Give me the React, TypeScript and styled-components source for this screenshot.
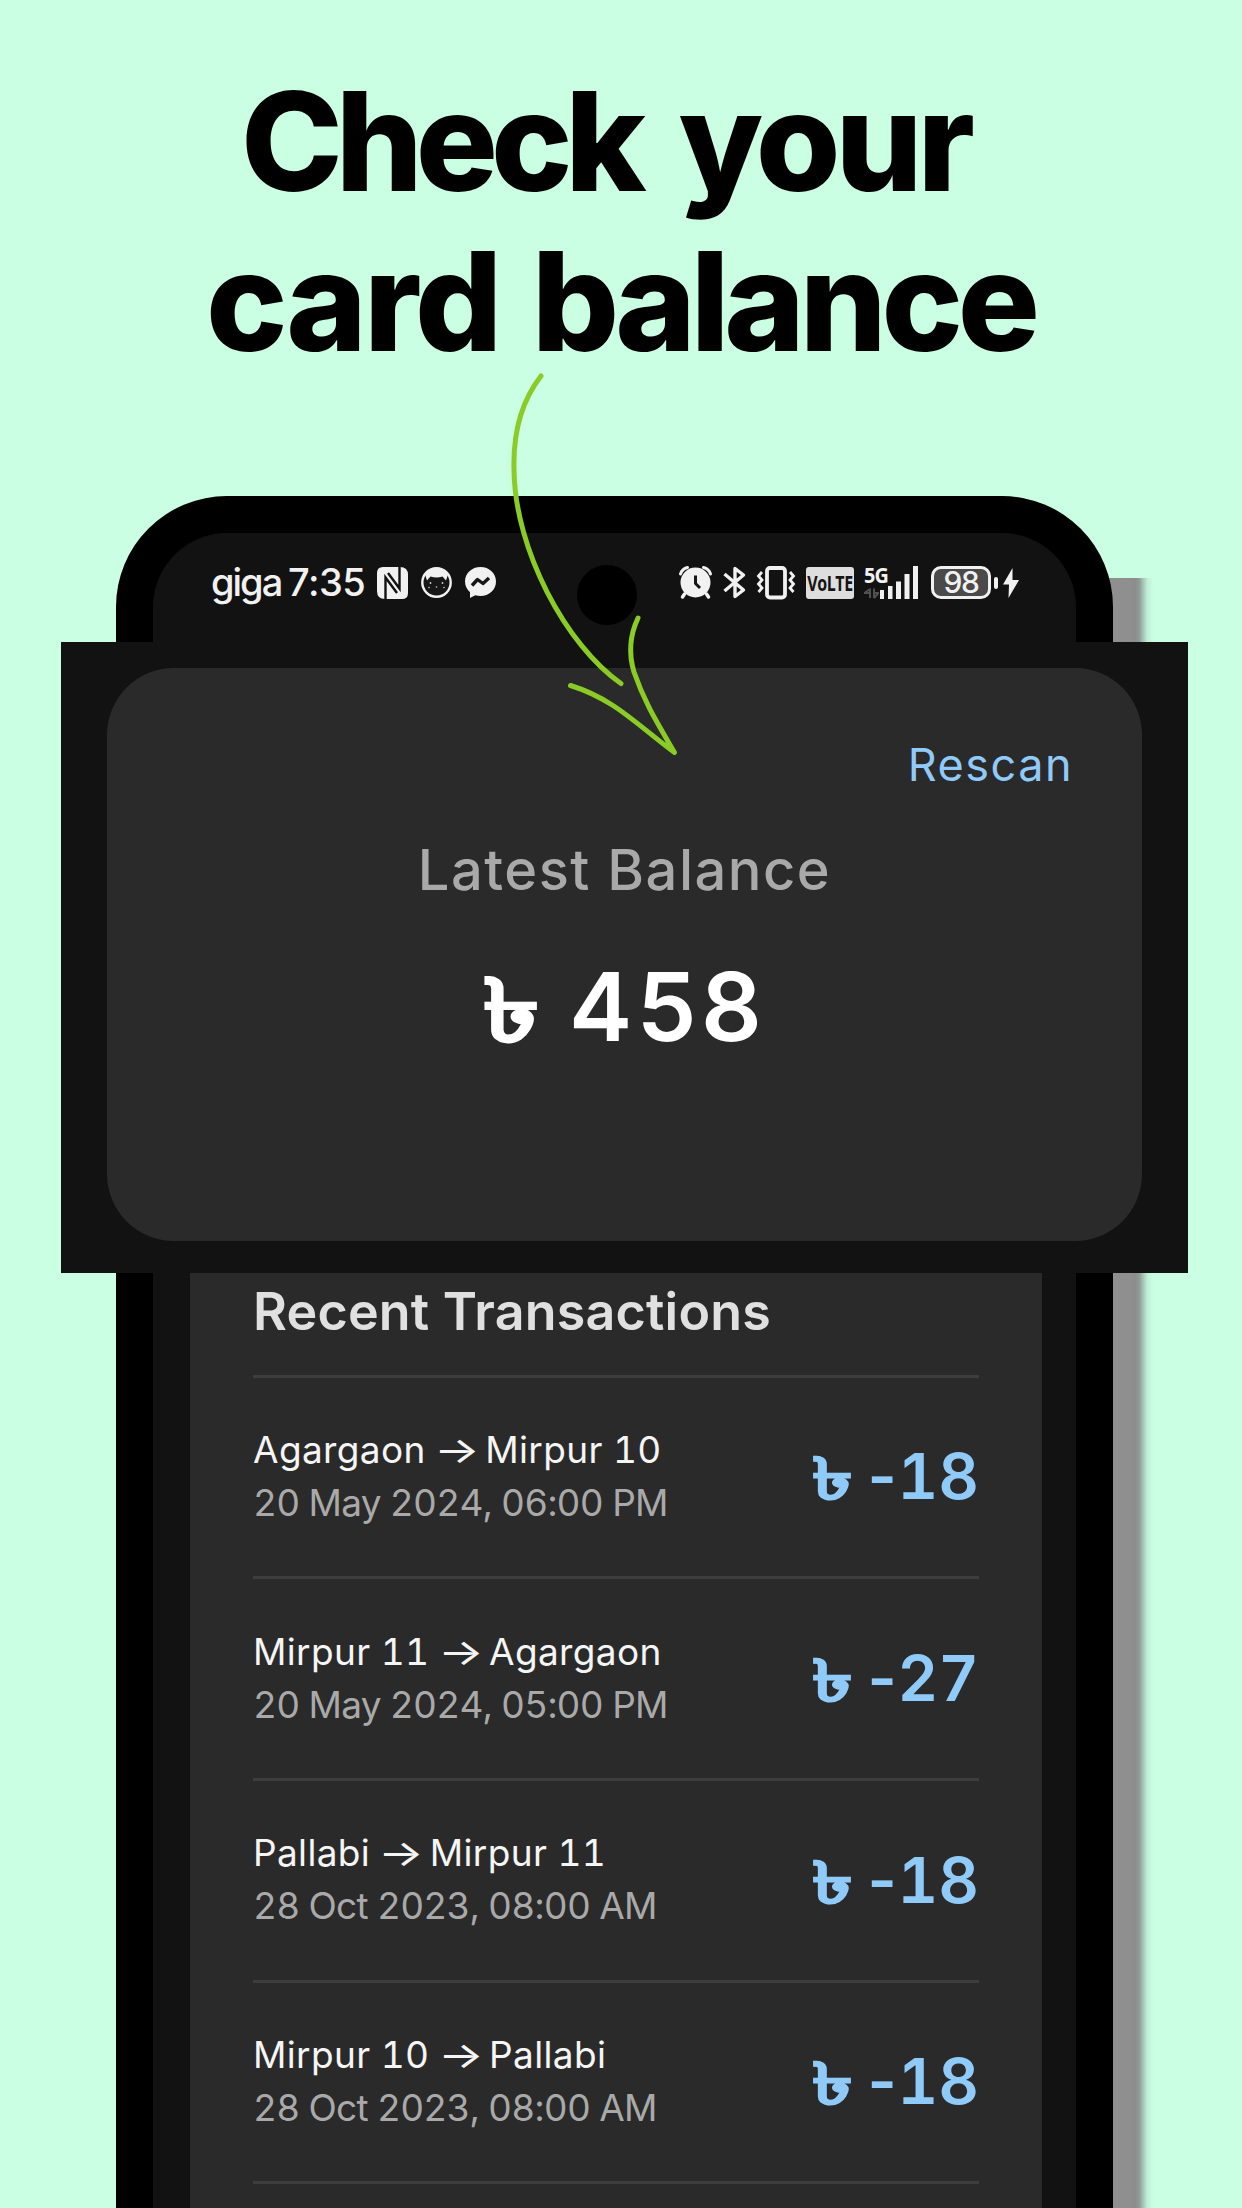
import React from "react";
import styled, { createGlobalStyle } from "styled-components";

const GlobalStyle = createGlobalStyle`
  *, *::before, *::after { box-sizing: border-box; }
  body { margin: 0; background: #caffe3; }
`;

const sans = `Inter, "Noto Sans", "Liberation Sans", sans-serif`;

const Poster = styled.main`
  position: relative;
  display: flex;
  flex-direction: column;
  width: 1242px;
  height: 2208px;
  overflow: hidden;
  background: #caffe3;
  font-family: ${sans};
`;

const Headline = styled.h1`
  display: flex;
  flex-direction: column;
  flex: none;
  height: 496px;
  margin: 0;
  padding-top: 61px;
  color: #000;
  font-size: 137px;
  font-weight: 800;
  line-height: 160px;
`;

const HeadlineLine = styled.span<{ $indent: number; $wordGap: number }>`
  display: block;
  padding-left: ${(p) => p.$indent}px;
  word-spacing: ${(p) => p.$wordGap}px;
  white-space: nowrap;
`;

const Word = styled.span<{ $tracking: number }>`
  letter-spacing: ${(p) => p.$tracking}px;
`;

const Phone = styled.section`
  position: relative;
  flex: none;
  width: 997px;
  height: 1712px;
  margin-left: 116px;
  padding: 37px 37px 0;
  border-radius: 111px 111px 0 0;
  background: #000;
`;

const PhoneShadow = styled.div`
  position: absolute;
  z-index: 0;
  top: 578px;
  left: 1080px;
  width: 73px;
  height: 1630px;
  background: linear-gradient(to right, #8f8f8f 0 68%, #8c8c8c 75%, #8f9a95 81%, #a9c8b9 87%, #bfeed6 92%, #caffe300 100%);
`;

const Screen = styled.div`
  display: flex;
  flex-direction: column;
  height: 100%;
  border-radius: 74px 74px 0 0;
  background: #121212;
`;

const StatusBar = styled.div`
  position: relative;
  display: flex;
  flex: none;
  align-items: flex-start;
  justify-content: space-between;
  height: 109px;
  padding: 33px 57px 0 58px;
  color: #f1f1f1;
`;

const StatusGroup = styled.div<{ $gap: number }>`
  display: flex;
  align-items: center;
  gap: ${(p) => p.$gap}px;
  height: 33px;
`;

const StatusText = styled.span<{ $width: number; $tracking: number }>`
  width: ${(p) => p.$width}px;
  font-size: 38px;
  font-weight: 500;
  line-height: 33px;
  letter-spacing: ${(p) => p.$tracking}px;
  white-space: nowrap;
`;

const Glyph = styled.svg`
  display: block;
  flex: none;
  overflow: visible;
`;

const VolteBadge = styled.span`
  display: flex;
  align-items: center;
  justify-content: center;
  width: 48px;
  height: 32px;
  border-radius: 3px;
  background: #dedede;
  color: #141414;
`;

const VolteLabel = styled.span`
  flex: none;
  font: 700 21px/32px "Open Sans", sans-serif;
  letter-spacing: -0.5px;
  transform: scaleX(0.76);
`;

const Signal = styled.div`
  display: grid;
  grid-template-columns: 16px 38px;
  height: 33px;
`;

const SignalLabel = styled.span`
  width: 24px;
  font: 700 22px/17px "Open Sans", sans-serif;
  letter-spacing: -1px;
  transform: scaleX(0.9);
  transform-origin: left;
`;

const Battery = styled.span`
  display: flex;
  align-items: center;
  justify-content: center;
  width: 60px;
  height: 33px;
  border: 3px solid #f1f1f1;
  border-radius: 10px;
  background: #4a4a4a;
  font-size: 30px;
  font-weight: 500;
  line-height: 27px;
  letter-spacing: -1.5px;
`;

const BatteryGroup = styled.div`
  display: flex;
  align-items: center;
  gap: 3px;
  margin-left: 3px;
`;

const BatteryTip = styled.span`
  width: 4px;
  height: 12px;
  margin-right: 2px;
  border-radius: 2px;
  background: #f1f1f1;
`;

const Camera = styled.div`
  position: absolute;
  top: 32px;
  left: 424px;
  width: 60px;
  height: 60px;
  border-radius: 50%;
  background: #000;
`;

const BalancePanel = styled.section`
  position: relative;
  flex: none;
  height: 631px;
  margin: 0 -112px 0 -92px;
  padding: 26px 46px 32px;
  background: #121212;
`;

const BalanceCard = styled.div`
  display: flex;
  flex-direction: column;
  align-items: center;
  height: 573px;
  padding-top: 69px;
  border-radius: 67px;
  background: #2a2a2a;
`;

const Rescan = styled.button`
  align-self: flex-end;
  margin: 0 69px 0 0;
  padding: 0;
  border: 0;
  background: none;
  color: #90caf9;
  font: 400 45px/56px ${sans};
  letter-spacing: 1.5px;
`;

const BalanceLabel = styled.p`
  margin: 43px 0 0;
  color: #a9a9a9;
  font-size: 56px;
  font-weight: 500;
  line-height: 68px;
  letter-spacing: 1.5px;
`;

const BalanceValue = styled.p`
  display: flex;
  margin: 47px 0 0;
  color: #fff;
  font-size: 95px;
  font-weight: 600;
  line-height: 112px;
  letter-spacing: 4.5px;
  white-space: pre;
`;

const Taka = styled.span<{ $width: number; $scaleX: number; $scaleY: number }>`
  display: block;
  flex: none;
  width: ${(p) => p.$width}px;
  letter-spacing: 0;
  transform: scale(${(p) => p.$scaleX}, ${(p) => p.$scaleY});
  transform-origin: 0 80%;
  -webkit-text-stroke: 0.018em currentColor;
`;

const Transactions = styled.section`
  flex: 1;
  margin: 0 34px 0 37px;
  padding: 7px 63px 0;
  background: #2a2a2a;
`;

const SectionTitle = styled.h2`
  margin: 0 0 30.5px;
  color: #e0e0e0;
  font-size: 52px;
  font-weight: 600;
  line-height: 64px;
  letter-spacing: 0.2px;
  white-space: nowrap;
`;

const List = styled.ul`
  margin: 0;
  padding: 0;
  border-bottom: 3px solid #3d3d3d;
  list-style: none;
  font-variant-numeric: tabular-nums;
`;

const Row = styled.li`
  display: flex;
  align-items: center;
  justify-content: space-between;
  height: 201.7px;
  padding-bottom: 1px;
  border-top: 3px solid #3d3d3d;
`;

const Route = styled.div`
  color: #f5f5f5;
  font-size: 37px;
  font-weight: 400;
  line-height: 52px;
  letter-spacing: 0.35px;
  white-space: nowrap;
`;

const RouteArrow = styled.span`
  display: inline-block;
  width: 41px;
  margin-left: -2px;
  transform: scaleX(1.3);
  transform-origin: left;
`;

const When = styled.div`
  color: #a9a9a9;
  font-size: 37px;
  font-weight: 400;
  line-height: 53px;
  letter-spacing: -0.78px;
  white-space: nowrap;
`;

const Amount = styled.div`
  display: flex;
  color: #90caf9;
  font-size: 63px;
  font-weight: 600;
  line-height: 64px;
  white-space: pre;
`;

const Sign = styled.span`
  display: block;
  width: 30px;
  font-variant-numeric: proportional-nums;
`;

const ArrowOverlay = styled.svg`
  position: absolute;
  top: 360px;
  left: 500px;
  width: 190px;
  height: 410px;
`;

const NfcIcon = () => (
  <Glyph width="31" height="32" viewBox="0 0 31 32">
    <path d="M6 0H23Q31 0 31 8V26Q31 32 25 32H8Q0 32 0 24V6Q0 0 6 0Z" fill="#f1f1f1" />
    <path d="M8.500 32V10.500L20 26M22.500 0V21.500L11 6" fill="none" stroke="#121212" strokeWidth="2.400" />
  </Glyph>
);

const CatIcon = () => (
  <Glyph width="31" height="31" viewBox="0 0 31 31">
    <circle cx="15.500" cy="15.500" r="14.200" fill="#161616" stroke="#f1f1f1" strokeWidth="2.400" />
    <path d="M4 7.500Q8 1 15.500 1T27 7.500L25 13.500L21.500 9.500Q15.500 11.500 9.500 9.500L6 13.500Z" fill="#f1f1f1" />
    <g fill="#cfcfcf">
      <circle cx="9.500" cy="16" r="0.900" />
      <circle cx="21.500" cy="16" r="0.900" />
      <circle cx="8" cy="20.500" r="0.800" />
      <circle cx="23" cy="20.500" r="0.800" />
      <circle cx="15.500" cy="20" r="0.800" />
    </g>
  </Glyph>
);

const MessengerIcon = () => (
  <Glyph width="31" height="31" viewBox="0 0 31 31">
    <path d="M15.500 0C6.800 0 0 6.200 0 14.500C0 19 2 22.600 5 25.200V31L10.200 28.300C12 28.800 13.700 29 15.500 29C24.200 29 31 22.800 31 14.500S24.200 0 15.500 0Z" fill="#f1f1f1" />
    <path d="M7 18.500L12.500 12.500L18 16.500L24 11" fill="none" stroke="#161616" strokeWidth="3.400" strokeLinejoin="round" />
  </Glyph>
);

const AlarmIcon = () => (
  <Glyph width="34" height="33" viewBox="0 0 34 33" fill="none" stroke="#f1f1f1" strokeLinecap="round">
    <circle cx="16.500" cy="16.500" r="15" fill="#f1f1f1" stroke="none" />
    <path d="M1.500 8Q3 3 8.500 1.500M31.500 8Q30 3 24.500 1.500" strokeWidth="3" />
    <path d="M5.500 28L3.500 31M27.500 28L29.500 31" strokeWidth="3.500" />
    <path d="M16.500 9.500V17.500L21 22" stroke="#161616" strokeWidth="3" strokeLinecap="butt" />
  </Glyph>
);

const BluetoothIcon = () => (
  <Glyph width="24" height="33" viewBox="0 0 24 33" fill="none" stroke="#f1f1f1" strokeWidth="3.400">
    <path d="M1.500 8L20.500 24L12 30.500V2.500L20.500 9L1.500 25" strokeLinejoin="round" />
  </Glyph>
);

const VibrateIcon = () => (
  <Glyph width="39" height="33" viewBox="0 0 39 33" fill="none" stroke="#f1f1f1">
    <rect x="10" y="2" width="18" height="29.500" rx="3" strokeWidth="3.800" />
    <path d="M5 6L1.500 10L5 14L1.500 18L5 22L1.500 26M33 6L36.500 10L33 14L36.500 18L33 22L36.500 26" strokeWidth="2.800" />
  </Glyph>
);

const SignalBars = () => (
  <Glyph width="38" height="33" viewBox="0 0 38 33" fill="#f1f1f1">
    <path d="M-10 22.500V32M-15 26.500L-10 23M-16 27H-10M-6 22.500V32M-6 32L-2 27.500M-6 27H-1" fill="none" stroke="#505050" strokeWidth="2" />
    <rect x="0" y="24" width="4" height="9" />
    <rect x="8" y="20" width="4.500" height="13" />
    <rect x="16" y="15.500" width="5" height="17.500" />
    <rect x="24.500" y="8" width="5" height="25" />
    <rect x="33" y="0" width="5" height="33" />
  </Glyph>
);

const BoltIcon = () => (
  <Glyph width="16" height="30" viewBox="0 0 16 30">
    <path d="M9.500 0L0 16.500H6L5.500 30L16 12H9.500Z" fill="#f1f1f1" />
  </Glyph>
);

const trips = [
  { from: "Agargaon", to: "Mirpur 10", when: "20 May 2024, 06:00 PM", fare: 18 },
  { from: "Mirpur 11", to: "Agargaon", when: "20 May 2024, 05:00 PM", fare: 27 },
  { from: "Pallabi", to: "Mirpur 11", when: "28 Oct 2023, 08:00 AM", fare: 18 },
  { from: "Mirpur 10", to: "Pallabi", when: "28 Oct 2023, 08:00 AM", fare: 18 },
];

export default function App() {
  return (
    <Poster>
      <GlobalStyle />
      <Headline>
        <HeadlineLine $indent={241} $wordGap={9}>
          <Word $tracking={-7.1}>Check</Word> <Word $tracking={-5}>your</Word>
        </HeadlineLine>
        <HeadlineLine $indent={206} $wordGap={2}>
          <Word $tracking={-2.7}>card</Word> <Word $tracking={-5.2}>balance</Word>
        </HeadlineLine>
      </Headline>
      <PhoneShadow />
      <Phone>
        <Screen>
          <StatusBar>
            <StatusGroup $gap={13}>
              <StatusText $width={64} $tracking={-2}>giga</StatusText>
              <StatusText $width={76} $tracking={-0.5}>7:35</StatusText>
              <NfcIcon />
              <CatIcon />
              <MessengerIcon />
            </StatusGroup>
            <Camera />
            <StatusGroup $gap={10}>
              <AlarmIcon />
              <BluetoothIcon />
              <VibrateIcon />
              <VolteBadge>
                <VolteLabel>VoLTE</VolteLabel>
              </VolteBadge>
              <Signal>
                <SignalLabel>5G</SignalLabel>
                <SignalBars />
              </Signal>
              <BatteryGroup>
                <Battery>98</Battery>
                <BatteryTip />
                <BoltIcon />
              </BatteryGroup>
            </StatusGroup>
          </StatusBar>
          <BalancePanel>
            <BalanceCard>
              <Rescan>Rescan</Rescan>
              <BalanceLabel>Latest Balance</BalanceLabel>
              <BalanceValue>
                <Taka $width={58} $scaleX={1.2} $scaleY={0.92}>৳</Taka>
                <span>{" 458"}</span>
              </BalanceValue>
            </BalanceCard>
          </BalancePanel>
          <Transactions>
            <SectionTitle>Recent Transactions</SectionTitle>
            <List>
              {trips.map((trip, i) => (
                <Row key={i}>
                  <div>
                    <Route>
                      {trip.from} <RouteArrow>→</RouteArrow> {trip.to}
                    </Route>
                    <When>{trip.when}</When>
                  </div>
                  <Amount>
                    <Taka $width={39} $scaleX={1.3} $scaleY={0.92}>৳</Taka>
                    <span> </span>
                    <Sign>-</Sign>
                    <span>{trip.fare}</span>
                  </Amount>
                </Row>
              ))}
            </List>
          </Transactions>
        </Screen>
      </Phone>
      <ArrowOverlay viewBox="500 360 190 410" fill="none" stroke="#8acb25" strokeWidth="5" strokeLinecap="round" strokeLinejoin="round">
        <path d="M541 376C520 403 513 435 514 470C515 550 566 645 621 683.500" />
        <path d="M570.500 685.500C614 699 636 724 674.500 752.500C655 719 644 701 634 672C628 652 630 635 638 618" />
      </ArrowOverlay>
    </Poster>
  );
}
